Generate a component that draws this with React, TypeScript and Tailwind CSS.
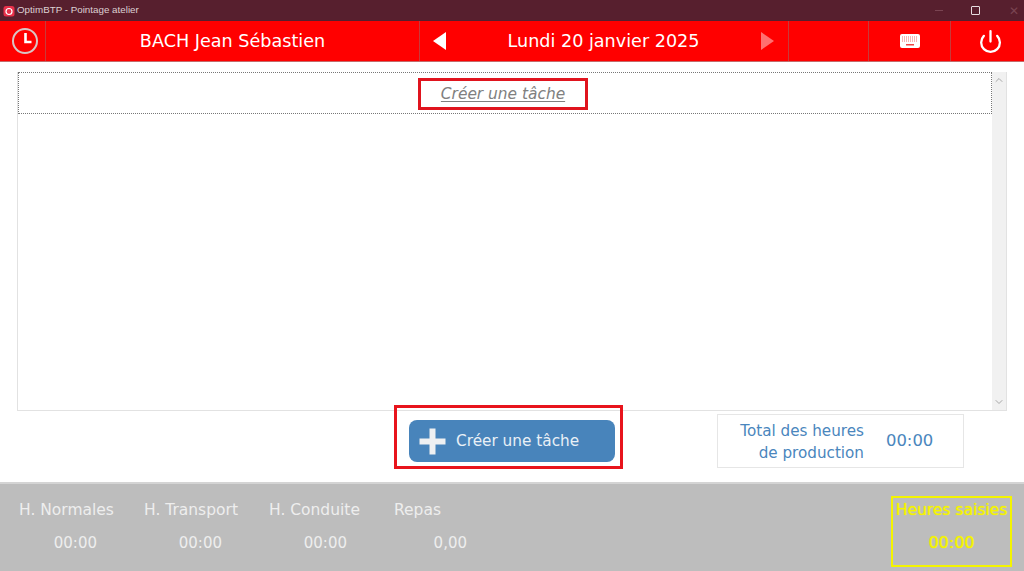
import { ChevronDown, ChevronUp, Power } from "lucide-react";

const totals = [
  { label: "H. Normales", value: "00:00", valueWidth: "w-[78px]" },
  { label: "H. Transport", value: "00:00", valueWidth: "w-[78px]" },
  { label: "H. Conduite", value: "00:00", valueWidth: "w-[78px]" },
  { label: "Repas", value: "0,00", valueWidth: "w-[73px]" },
];

function ClockIcon() {
  return (
    <svg width="28" height="28" viewBox="0 0 28 28" fill="none">
      <circle cx="14" cy="14" r="12" stroke="#d9c4c4" strokeWidth="2" />
      <path d="M14.5 6v9h6" stroke="#fff" strokeWidth="2.6" />
    </svg>
  );
}

function KeyboardIcon() {
  return (
    <svg width="20" height="14" viewBox="0 0 20 14">
      <rect x="0" y="0" width="20" height="14" rx="2" fill="#fff" />
      <g fill="none" stroke="#f26a6a" strokeWidth="1" strokeDasharray="1 1">
        <path d="M2 3h16" />
        <path d="M2 5h16" />
        <path d="M2 7h16" />
      </g>
      <rect x="6" y="10" width="8" height="1.5" fill="#ee4444" />
    </svg>
  );
}

function AppLogo() {
  return (
    <svg width="12" height="12" viewBox="0 0 12 12" fill="none">
      <rect x="0.5" y="1" width="11" height="10.5" rx="2.5" fill="#e8304a" />
      <circle cx="6" cy="6.5" r="3" stroke="#fff" strokeWidth="1.2" />
    </svg>
  );
}

export default function App() {
  return (
    <div className="flex h-[571px] w-[1024px] flex-col overflow-hidden bg-white font-['DejaVu_Sans',sans-serif]">
      <div className="flex h-[21px] shrink-0 items-center bg-[#571f2e] pl-[3px] text-white">
        <AppLogo />
        <span className="ml-[2px] font-['Liberation_Sans',sans-serif] text-[9.8px] text-[#ddd0d3]">
          OptimBTP - Pointage atelier
        </span>
        <div className="ml-auto flex items-center">
          <span className="mr-[28px] h-px w-[8px] bg-[#7a4452]" />
          <span className="mr-[29px] h-[9px] w-[9px] rounded-[1px] border border-[#e6dcdf]" />
          <span className="mr-[5px] font-['Liberation_Sans',sans-serif] text-[12px] leading-none text-[#7a4452]">✕</span>
        </div>
      </div>

      <header className="flex h-[41px] shrink-0 border-b border-[#c46a6a] bg-[#ff0000] text-[17.6px] text-white">
        <div className="flex w-[46px] items-center justify-center border-r border-[#c83a3a] pl-[4px]">
          <ClockIcon />
        </div>
        <div className="flex w-[374px] items-center justify-center border-r border-[#c83a3a] pt-px">BACH Jean Sébastien</div>
        <div className="flex w-[369px] items-center border-r border-[#c83a3a] pl-[13px] pr-[14px]">
          <span className="h-0 w-0 border-y-[9px] border-r-[13px] border-y-transparent border-r-white" />
          <span className="flex-1 pt-px text-center">Lundi 20 janvier 2025</span>
          <span className="h-0 w-0 border-y-[9px] border-l-[13px] border-y-transparent border-l-[#ff7070]" />
        </div>
        <div className="w-[80px] border-r border-[#c83a3a]" />
        <div className="flex w-[82px] items-center justify-center border-r border-[#c83a3a]">
          <KeyboardIcon />
        </div>
        <div className="flex flex-1 items-center justify-center pl-[6px]">
          <Power size={25} strokeWidth={2.2} />
        </div>
      </header>

      <main className="flex-1 px-[17px] pt-[10px]">
        <div className="flex h-[339px] w-[990px] border border-t-0 border-[#e2e2e2]">
          <div className="flex-1">
            <div className="flex h-[42px] items-start justify-center border border-dotted border-[#777]">
              <span className="mr-[4px] mt-[5px] flex h-[32px] w-[170px] items-center justify-center border-[3px] border-[#e0141e] pt-[2px] text-[15.4px] italic text-[#808080] underline underline-offset-2">
                Créer une tâche
              </span>
            </div>
          </div>
          <div className="flex w-[14px] flex-col items-center justify-between bg-[#f1f1f1] py-[2px] text-[#a8a8a8]">
            <ChevronUp size={12} />
            <ChevronDown size={12} />
          </div>
        </div>

        <div className="flex items-start">
          <div className="ml-[377px] -mt-[6px] flex h-[64px] w-[229px] items-start border-[3px] border-[#e8141c] pl-[12px] pt-[12px]">
            <button className="flex h-[42px] w-[206px] items-center rounded-[8px] bg-[#4884bb] pl-[10px] text-[15.3px] text-[#e9f0f6]">
              <svg width="27" height="27" viewBox="0 0 27 27" className="shrink-0">
                <path d="M10.5 0.5h6v10h10v6h-10v10h-6v-10H0.5v-6h10z" fill="#eef0f2" />
              </svg>
              <span className="ml-[10px]">Créer une tâche</span>
            </button>
          </div>
          <div className="ml-[94px] mt-[3px] flex h-[54px] w-[247px] items-center border border-[#e6e6e6] pl-[21px] text-[15.2px] text-[#4a86bd]">
            <span className="w-[125px] whitespace-nowrap pt-[2px] text-right leading-[22px]">
              Total des heures
              <br />
              de production
            </span>
            <span className="ml-[22px] text-[16.4px] font-medium">00:00</span>
          </div>
        </div>
      </main>

      <footer className="flex h-[89px] shrink-0 border-t-2 border-[#d4d4d4] bg-[#bdbdbd] pl-[19px] text-[15.5px] text-[#eeeeee]">
        <div className="grid grid-cols-[repeat(4,125px)] pt-[16px]">
          {totals.map((t) => (
            <div key={t.label}>
              <div className="whitespace-nowrap leading-[20px]">{t.label}</div>
              <div className={`mt-[13px] text-right text-[15px] leading-[20px] ${t.valueWidth}`}>{t.value}</div>
            </div>
          ))}
        </div>
        <div className="ml-[372px] mt-[12px] flex h-[71px] w-[121px] flex-col items-center border-2 border-[#f4f400] pt-[2px] text-[#f4f400]">
          <div className="whitespace-nowrap leading-[20px] [text-shadow:0_0_1px_#f4f400]">Heures saisies</div>
          <div className="mt-[13px] text-[16px] leading-[20px] [text-shadow:0_0_1px_#f4f400]">00:00</div>
        </div>
      </footer>
    </div>
  );
}
